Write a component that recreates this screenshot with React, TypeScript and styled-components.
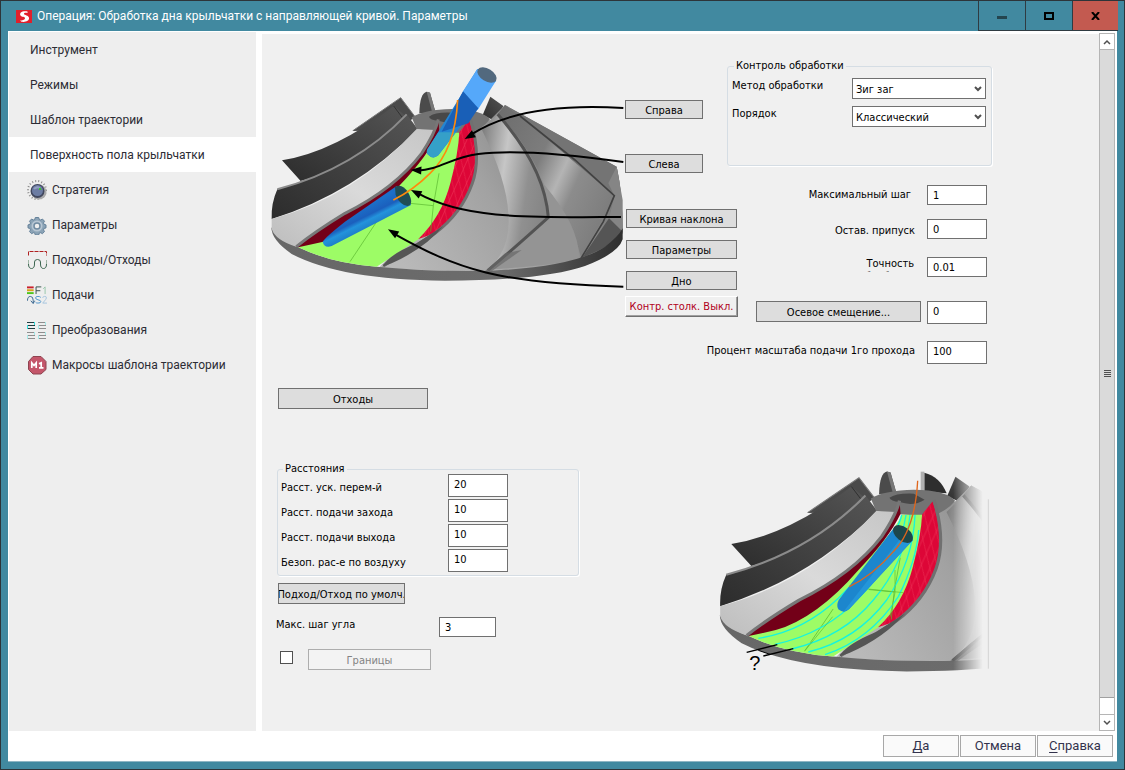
import React from 'react';
import styled, { createGlobalStyle, css } from 'styled-components';

const GlobalStyle = createGlobalStyle`
  *, *::before, *::after { box-sizing: border-box; }
  body { margin: 0; background: #4189a0; }
  button, input, select { font: inherit; color: inherit; margin: 0; }
`;

const formFont = '"DejaVu Sans Condensed", "DejaVu Sans", sans-serif';
const menuFont = 'Roboto, sans-serif';

/* ---------- window frame ---------- */

const Window = styled.div`
  display: flex;
  flex-direction: column;
  min-height: 100vh;
  padding: 0 7px 7px;
  background: #4189a0;
  border: 1px solid #2d3439;
`;

const TitleBar = styled.header`
  display: flex;
  align-items: center;
  height: 30px;
  margin-right: -1px;
  padding-left: 8px;
  gap: 5px;
  color: #fff;
`;

const Title = styled.h1`
  flex: 1;
  margin: 0;
  font: 400 12px/16px ${menuFont};
  white-space: nowrap;
`;

const WindowControls = styled.div`
  display: flex;
  align-self: stretch;
`;

const WindowButton = styled.button<{ $danger?: boolean }>`
  display: flex;
  align-items: center;
  justify-content: center;
  width: ${(p) => (p.$danger ? 46 : 47)}px;
  padding: 0;
  border: solid #2f3b42;
  border-width: 0 0 1px 1px;
  background: ${(p) => (p.$danger ? '#c35a50' : '#4189a0')};
`;

const Content = styled.div`
  display: flex;
  flex: 1;
  flex-direction: column;
  background: #fff;
  border-bottom: 1px solid #8fb6c4;
`;

const Body = styled.div`
  display: flex;
  flex: 1;
  padding: 1px 2px 0 1px;
`;

/* ---------- side menu ---------- */

const Sidebar = styled.nav`
  width: 247px;
  flex: none;
  background: #eee;
`;

const MenuItem = styled.button<{ $active?: boolean; $icon?: boolean }>`
  display: flex;
  align-items: center;
  width: 100%;
  height: 35px;
  gap: 5px;
  padding: 0 0 0 ${(p) => (p.$icon ? 18 : 21)}px;
  border: 0;
  background: ${(p) => (p.$active ? '#fff' : 'transparent')};
  color: #2c2c34;
  font: 400 12px/16px ${menuFont};
  text-align: left;
  white-space: nowrap;
`;

/* ---------- form panel ---------- */

const Panel = styled.main`
  flex: 1;
  margin: 2px 0 0 6px;
  padding: 16px 0 0 3px;
  background: #f0f0f0;
  color: #000;
  font: 400 11px/15px ${formFont};
`;

const TopSection = styled.section`
  display: grid;
  grid-template-columns: 360px 102px 265px;
  margin-bottom: 24px;
`;

const BottomSection = styled.section`
  display: grid;
  grid-template-columns: 445px 290px;
  align-items: start;
`;

const Callouts = styled.div`
  display: flex;
  flex-direction: column;
  align-items: flex-start;
  gap: 36px;
  padding-top: 50px;
`;

const CalloutGroup = styled.div<{ $gap: number; $indent?: number }>`
  display: flex;
  flex-direction: column;
  gap: ${(p) => p.$gap}px;
  padding-left: ${(p) => p.$indent ?? 0}px;
`;

const PushButton = styled.button<{ $width: number; $height?: number }>`
  display: flex;
  align-items: center;
  justify-content: center;
  flex: none;
  width: ${(p) => p.$width}px;
  height: ${(p) => p.$height ?? 21}px;
  padding: 1px 0 0;
  overflow: hidden;
  border: 1px solid #707070;
  background: #ddd;
  white-space: nowrap;
  &:disabled {
    border-color: #adadad;
    background: #f3f3f3;
    color: #838383;
  }
`;

const CollisionButton = styled.button`
  width: 113px;
  height: 21px;
  margin-top: -30px;
  padding: 0;
  border: 1px solid;
  border-color: #fff #707070 #707070 #fff;
  background: #f0f0f0;
  box-shadow: inset -1px -1px #a0a0a0;
  color: #b00020;
  white-space: nowrap;
`;

const GroupBox = styled.fieldset<{ $tall?: boolean }>`
  min-width: 0;
  margin: 0;
  padding: ${(p) => (p.$tall ? '7px 5px 38px 4px' : '0 3px 3px')};
  border: 1px solid #d5dde4;
  border-radius: 3px;
  box-shadow: 1px 1px #fff;
`;

const Legend = styled.legend`
  margin-left: 2px;
  padding: 0 2px;
  line-height: 10px;
`;

const FieldStack = styled.div<{ $gap: number }>`
  display: flex;
  flex-direction: column;
  gap: ${(p) => p.$gap}px;
`;

const SelectRow = styled.div`
  display: flex;
  justify-content: space-between;
  align-items: flex-start;
`;

const SelectBox = styled.div`
  position: relative;
  width: 134px;
  select {
    display: block;
    width: 100%;
    height: 21px;
    padding: 1px 16px 0 3px;
    appearance: none;
    border: 1px solid #707070;
    border-radius: 0;
    background: #fff;
  }
  svg {
    position: absolute;
    top: 8px;
    right: 4px;
    pointer-events: none;
  }
`;

const RightColumn = styled.div`
  min-width: 0;
  padding-top: 11px;
`;

const NumericFields = styled.div`
  display: grid;
  grid-template-columns: minmax(0, 1fr);
  grid-template-rows: 34px 38px 44px 40px 23px;
  margin: 19px 5px 0 0;
`;

const NumericRow = styled.div<{ $gap?: number }>`
  display: flex;
  justify-content: flex-end;
  align-items: flex-start;
  gap: ${(p) => p.$gap ?? 12}px;
`;

const Caption = styled.label<{ $top?: number; $clip?: boolean }>`
  flex: none;
  padding-top: ${(p) => p.$top ?? 2}px;
  white-space: nowrap;
  ${(p) =>
    p.$clip &&
    css`
      width: 60px;
      height: 15px;
      overflow: hidden;
      padding-top: 0;
      line-height: 13px;
      text-align: right;
      white-space: normal;
    `}
`;

const TextBox = styled.input<{ $width?: number; $tall?: boolean }>`
  flex: none;
  width: ${(p) => p.$width ?? 60}px;
  height: ${(p) => (p.$tall ? 23 : 20)}px;
  padding: ${(p) => (p.$tall ? '0 5px 3px' : '1px 5px 0')};
  border: 1px solid #707070;
  border-radius: 0;
  background: #fff;
`;

const Departures = styled.div`
  padding: 0 0 51px 13px;
`;

const Distances = styled.div`
  padding-top: 4px;
`;

const DistanceBox = styled.div`
  width: 302px;
  margin-left: 12px;
`;

const DistanceRow = styled.div`
  display: grid;
  grid-template-columns: 167px 60px;
`;

const DefaultsArea = styled.div`
  padding: 7px 0 0 13px;
`;

const AngleRow = styled.div`
  display: grid;
  grid-template-columns: 163px 57px;
  margin: 13px 0 12px -2px;
`;

const BoundaryRow = styled.div`
  display: flex;
  align-items: center;
  gap: 15px;
  padding: 0 0 0 2px;
`;

const CheckBox = styled.input`
  width: 13px;
  height: 13px;
  appearance: none;
  border: 1px solid #505050;
  background: #fff;
  margin-bottom: 4px !important;
`;

const Drawing = styled.svg`
  display: block;
`;

/* ---------- scroll bar and footer ---------- */

const ScrollBar = styled.div`
  display: flex;
  flex-direction: column;
  width: 16px;
  margin-top: 1px;
  border: 1px solid #b5b5b5;
  background: #fff;
`;

const ScrollArrow = styled.button`
  display: flex;
  align-items: center;
  justify-content: center;
  height: 16px;
  padding: 0;
  border: 0 solid #b5b5b5;
  background: #fff;
  &:first-child { border-bottom-width: 1px; }
  &:last-child { border-top-width: 1px; }
`;

const ScrollThumb = styled.div`
  display: flex;
  flex: 1;
  align-items: center;
  justify-content: center;
  margin-bottom: 16px;
  border-bottom: 1px solid #a0a0a0;
  background: #dadada;
`;

const Footer = styled.footer`
  display: flex;
  justify-content: flex-end;
  gap: 1px;
  padding: 4px 4px 4px 0;
`;

const FooterButton = styled.button`
  width: 76px;
  height: 22px;
  padding: 0;
  border: 1px solid #a8a8a8;
  background: #fafafa;
  color: #33334d;
  font: 400 13px/18px ${menuFont};
  u { text-underline-offset: 2px; text-decoration-skip-ink: none; }
`;

/* ---------- icons ---------- */

const IconSvg = styled.svg`
  flex: none;
`;

const DialIcon = () => (
  <IconSvg width="20" height="20" viewBox="0 0 20 20">
    <circle cx="10" cy="10" r="9" fill="none" stroke="#8c8c8c" strokeWidth="2" strokeDasharray="1 2.1" />
    <circle cx="12" cy="12" r="7.5" fill="#aaa" />
    <circle cx="10.5" cy="11" r="7" fill="#41475e" />
    <circle cx="10.5" cy="10.5" r="5.5" fill="#6c7ca3" />
    <path d="M7 9a4 3 0 0 1 6-1" fill="none" stroke="#93a2c2" strokeWidth="2" />
    <rect x="12" y="8" width="2" height="2" fill="#39c52c" />
  </IconSvg>
);

const GearIcon = () => (
  <IconSvg width="20" height="20" viewBox="0 0 20 20">
    <g fill="#8ba3b6" stroke="#66829a" strokeWidth="1">
      <path d="M8.300 2.500h3.400l.5 1.800 1.500.7 1.700-1 2.100 2.200-1 1.700.6 1.500 1.900.5v3l-1.900.5-.6 1.500 1 1.700-2.100 2.100-1.700-1-1.500.6-.5 1.700H8.300l-.5-1.700-1.500-.6-1.700 1-2.100-2.100 1-1.700-.6-1.500-1.900-.5v-3l1.900-.5.6-1.500-1-1.700 2.100-2.200 1.700 1 1.500-.7z" />
      <circle cx="10" cy="11" r="5.500" fill="#b7c6d3" stroke="none" />
      <circle cx="10" cy="11" r="3" fill="#eee" stroke="#708ba1" strokeWidth="1.500" />
    </g>
  </IconSvg>
);

const ApproachIcon = () => (
  <IconSvg width="20" height="20" viewBox="0 0 20 20" fill="none">
    <path d="M1.500 5.500v-4h18v4" stroke="#b02020" strokeDasharray="4 1" />
    <path d="M1.500 10v4M19.500 10v4" stroke="#9fb5a5" />
    <path d="M1.500 14q0 4.500 3 4.500 3 0 3-4.500v-2q0-2.500 3-2.500t3 2.500v2q0 4.500 3 4.500 3 0 3-4.500" stroke="#3c6650" />
  </IconSvg>
);

const FeedIcon = () => (
  <IconSvg width="20" height="20" viewBox="0 0 21 20" fill="none">
    <path d="M0 2h7" stroke="#c8202c" strokeWidth="2" />
    <path d="M0 5h7" stroke="#d8a018" strokeWidth="2" />
    <path d="M0 8h7" stroke="#4fc51c" strokeWidth="2" />
    <path d="M9.500 9V1.500h5.500M9.500 5.500h4.500" stroke="#35504a" />
    <path d="M17 3.500l2-2V9" stroke="#97c7aa" />
    <path d="M.5 16q0-4.500 3-4.500 3 0 3 4v3M4 16l2.500 3 1.500-3" stroke="#36648e" />
    <path d="M14.500 12.500q-1-1-3-1-2.500 0-2.500 1.500 0 1.500 2.500 2 3 .5 3 2t-3 1.500q-2 0-2.500-1" stroke="#4c93cb" />
    <path d="M16.500 13q0-1.500 2-1.500t2 1.500q0 1-4 5.500h4.500" stroke="#a5c5de" />
  </IconSvg>
);

const TransformIcon = () => (
  <IconSvg width="20" height="20" viewBox="0 0 20 20" fill="none">
    <path d="M0 2.500h8M0 5.500h8M0 8.500h8" stroke="#203c40" />
    <path d="M.5 5v4M7.500 2v3" stroke="#35dede" />
    <path d="M11 2.500h8M11 5.500h8M11 8.500h8M0 12.500h8M0 15.500h8M0 18.500h8M11 12.500h8M11 15.500h8M11 18.500h8" stroke="#8e8e8e" />
    <path d="M18.500 2v3M11.500 5v4M7.500 12v3M.5 15v4M18.500 12v3M11.500 15v4" stroke="#a5e8e8" />
  </IconSvg>
);

const MacroIcon = () => (
  <IconSvg width="20" height="20" viewBox="0 0 20 20">
    <path d="M6 1.500h8l5 5v8l-5 4.500H6l-4.500-4.500v-8z" fill="#c4566a" stroke="#8d4450" />
    <path d="M4.800 13V7.800l2.200 2.700 2.200-2.700V13M12 8.700l2.200-1V13M12 12.800h4.500" fill="none" stroke="#fff" strokeWidth="1.700" />
  </IconSvg>
);

const LogoIcon = () => (
  <IconSvg width="16" height="13" viewBox="0 0 16 13">
    <rect width="16" height="13" fill="#e11f2b" />
    <path d="M11.500 1.500C6 .5 3 3 4.500 5.500c1 1.700 5 1 4.500 3-.4 1.400-3 2-5 2l1.500 1.300c4 .6 8-.8 7.500-4C12.500 5 8.500 5.500 8 4c-.3-1 1.500-1.600 3.500-1z" fill="#fff" />
  </IconSvg>
);

const Chevron = ({ up, bold }: { up?: boolean; bold?: boolean }) => (
  <svg width="8" height="6" viewBox="0 0 8 6" fill="none">
    <path d={up ? 'M1 5l3-3 3 3' : 'M1 1l3 3 3-3'} stroke="#505050" strokeWidth={bold ? 2 : 1.5} />
  </svg>
);

/* ---------- impeller drawings ---------- */

const Gradients = ({ id }: { id: string }) => (
  <defs>
    <linearGradient id={`${id}-dark`} x1="0" y1="1" x2="1" y2="0">
      <stop offset="0" stopColor="#2c2c2c" />
      <stop offset="1" stopColor="#555" />
    </linearGradient>
    <linearGradient id={`${id}-body`} x1="0" y1=".7" x2="1" y2=".3">
      <stop offset="0" stopColor="#b9b9b9" />
      <stop offset=".45" stopColor="#a2a2a2" />
      <stop offset="1" stopColor="#6e6e6e" />
    </linearGradient>
    <linearGradient id={`${id}-lens`} x1="0" y1="0" x2="1" y2=".35">
      <stop offset="0" stopColor="#777" />
      <stop offset=".4" stopColor="#c6c6c6" />
      <stop offset=".75" stopColor="#909090" />
      <stop offset="1" stopColor="#868686" />
    </linearGradient>
    <linearGradient id={`${id}-blade`} x1="0" y1="0" x2="1" y2=".6">
      <stop offset="0" stopColor="#6c6c6c" />
      <stop offset=".42" stopColor="#7d7d7d" />
      <stop offset=".6" stopColor="#b4b4b4" />
      <stop offset=".72" stopColor="#8c8c8c" />
      <stop offset="1" stopColor="#7d7d7d" />
    </linearGradient>
    <linearGradient id={`${id}-rim`} x1="0" x2="1">
      <stop offset="0" stopColor="#676767" />
      <stop offset=".65" stopColor="#6c6c6c" />
      <stop offset=".9" stopColor="#404040" />
      <stop offset="1" stopColor="#2e2e2e" />
    </linearGradient>
    <linearGradient id={`${id}-ribbon`} x1="0" y1="1" x2="1" y2="0">
      <stop offset="0" stopColor="#bdbdbd" />
      <stop offset=".5" stopColor="#dadada" />
      <stop offset="1" stopColor="#c6c6c6" />
    </linearGradient>
    <linearGradient id={`${id}-tool`} gradientUnits="userSpaceOnUse" x1="290" y1="475" x2="320" y2="535">
      <stop offset="0" stopColor="#1c6fc8" />
      <stop offset=".4" stopColor="#1b5fbd" />
      <stop offset=".6" stopColor="#2393dc" />
      <stop offset="1" stopColor="#1c78c4" />
    </linearGradient>
    <pattern id={`${id}-mesh`} width="26" height="34" patternUnits="userSpaceOnUse" patternTransform="rotate(24)">
      <path d="M0 0L26 34M13 0V34" fill="none" stroke="#f0385a" strokeWidth="1.500" />
    </pattern>
  </defs>
);

const Impeller = ({ id }: { id: string }) => (
  <g>
    {/* blade tips behind the hub */}
    <path d="M463 190Q464 130 485 125L495 128 512 188z" fill="#4b4b4b" />
    <path d="M485 125L495 128 512 188 502 188z" fill="#777" />
    <path d="M653 195L676 140 715 168 695 215z" fill={`url(#${id}-dark)`} />
    {/* right hand body with its blades */}
    <path d="M600 225L675 210 720 165 1055 350Q1073 430 1073 550 1000 650 680 668L340 655 430 560 480 540Q600 400 600 225z" fill={`url(#${id}-body)`} />
    <path d="M651 240L696 196Q835 360 850 500 770 575 665 662 740 600 730 490 725 390 651 240z" fill={`url(#${id}-lens)`} />
    <path d="M720 165L765 198 1048 437 1015 505 948 623Q920 510 838 405 790 280 698 192z" fill={`url(#${id}-blade)`} />
    <path d="M838 405Q945 530 942 628 830 650 682 658 770 580 850 502z" fill="#949494" />
    <path d="M720 165L1055 350Q1073 430 1073 545L1032 505 1048 437 765 198z" fill="#747474" />
    <path d="M1030 400L1048 437 1032 505 1073 545 1073 450 1055 350z" fill="#858585" />
    <path d="M1032 505L1073 545Q1050 585 952 622z" fill="#555" />
    <path d="M698 193Q838 350 850 502 770 575 668 662" fill="none" stroke="#535353" strokeWidth="9" />
    <path d="M765 198L930 330 1048 437 1015 515 948 625" fill="none" stroke="#414141" strokeWidth="5" />
    {/* base rim */}
    <path d="M19 532Q40 570 100 592 200 640 335 650 500 666 680 662 930 650 1020 590 1060 560 1073 535V568Q1060 610 960 648 830 692 540 692 230 690 80 612 19 570 19 532z" fill={`url(#${id}-rim)`} />
    {/* left blades */}
    <path d="M262 243L407 143 450 200 400 240z" fill="#4a4a4a" />
    <path d="M51 331Q210 305 386 168L430 205Q280 350 107 393z" fill={`url(#${id}-dark)`} />
    <path d="M386 168L412 203" stroke="#222" strokeWidth="2" />
    <path d="M265 241L407 143 450 200" fill="none" stroke="#777" strokeWidth="3" />
    <path d="M37 418Q270 355 425 193L458 237Q270 430 20 507 18 460 37 418z" fill={`url(#${id}-dark)`} />
    <path d="M37 418Q270 355 425 193" fill="none" stroke="#8b8b8b" strokeWidth="6" />
    {/* hub */}
    <path d="M440 202Q480 178 560 177 650 178 675 208 650 240 610 250 540 252 455 238z" fill="#737373" />
    <path d="M492 200Q510 186 560 188L590 205Q560 225 520 212 495 210 492 200z" fill="#484848" />
    {/* light ribbon, floor and side walls */}
    <path d="M20 507Q270 440 455 237L510 240Q495 275 470 310 390 415 240 490 150 545 94 590 30 570 20 536z" fill={`url(#${id}-ribbon)`} />
    <path d="M100 592Q300 510 437 365 520 275 525 248H588L570 400Q560 500 495 545L335 650Q200 640 100 592z" fill="#9dfc66" />
    <path d="M520 208L523 245Q490 315 405 405 290 540 175 575L100 592 94 590Q150 545 240 490 390 415 470 310 510 250 520 208z" fill="#730018" />
    <path d="M583 247L612 210Q648 310 622 400 590 490 510 550L460 567Q530 500 556 400 580 310 583 247z" fill="#dd0637" />
    <path d="M583 247L612 210Q648 310 622 400 590 490 510 550L460 567Q530 500 556 400 580 310 583 247z" fill={`url(#${id}-mesh)`} />
    <path d="M94 590Q150 545 240 490 390 415 470 310 510 250 520 208" fill="none" stroke="#777" strokeWidth="9" />
    <path d="M616 206Q650 320 622 400 590 490 510 550L355 648" fill="none" stroke="#707070" strokeWidth="9" />
    <path d="M352 650Q370 615 455 580L535 528Q480 595 380 640z" fill="#555" />
    <path d="M335 515L255 635M435 460L505 467 522 370M505 467L497 545" fill="none" stroke="#58b52e" strokeWidth="2" />
    <path d="M720 610L660 664H680L770 600z" fill="#686868" opacity=".7" />
  </g>
);

const ArrowHead = ({ x, y, angle }: { x: number; y: number; angle: number }) => (
  <path d="M0 0L32-12V12z" transform={`translate(${x} ${y}) rotate(${angle})`} />
);

const CalloutDrawing = () => (
  <Drawing width="360" height="240" viewBox="0 0 1080 720" role="img" aria-label="Крыльчатка">
    <Gradients id="a" />
    <Impeller id="a" />
    <path d="M395 408Q430 420 438 465L200 588Q178 596 173 575 178 564 240 515z" fill="url(#a-tool)" />
    <path d="M390 412Q410 398 430 428 448 462 428 468 405 466 392 435z" fill="#1f4d55" />
    <path d="M637 57L693 92 520 316Q503 330 487 312 482 302 492 290z" fill="#2385d2" />
    <path d="M637 57L693 92 638 180 594 124z" fill="#55a8fa" />
    <path d="M594 124L640 175 610 220 530 245z" fill="#195fb7" />
    <path d="M520 247H572L520 316Q503 330 487 312 482 302 492 290z" fill="#35a0c8" />
    <ellipse cx="666" cy="75" rx="32" ry="19" transform="rotate(32 666 75)" fill="#52697e" />
    <path d="M578 150Q570 300 495 370 445 420 385 450" fill="none" stroke="#ff8a0c" strokeWidth="5" />
    <g fill="none" stroke="#000" strokeWidth="6">
      <path d="M1075 174Q770 155 618 254" />
      <path d="M1075 336Q780 295 640 312C550 325 530 358 455 362" />
      <path d="M1068 501C800 502 600 510 455 428" />
      <path d="M1075 710C700 700 580 660 385 550" />
    </g>
    <ArrowHead x={599} y={267} angle={-30} />
    <ArrowHead x={437} y={360} angle={3} />
    <ArrowHead x={438} y={420} angle={27} />
    <ArrowHead x={369} y={538} angle={31} />
  </Drawing>
);

const FloorDrawing = () => (
  <Drawing width="290" height="220" viewBox="0 0 870 660" role="img" aria-label="Дно крыльчатки">
    <Gradients id="b" />
    <defs>
      <linearGradient id="b-fade" gradientUnits="userSpaceOnUse" x1="730" x2="818" y1="0" y2="0">
        <stop offset="0" stopColor="#fff" />
        <stop offset="1" stopColor="#000" />
      </linearGradient>
      <mask id="b-mask" maskUnits="userSpaceOnUse" x="0" y="0" width="870" height="660">
        <rect width="870" height="660" fill="url(#b-fade)" />
      </mask>
    </defs>
    <path d="M643 38Q690 50 710 100L643 95z" fill="#2e2e2e" />
    <path d="M632 35H643V95H632z" fill="#b0b0b0" />
    <g mask="url(#b-mask)">
      <g transform="matrix(1.076 0 0 1.058 9 -98)">
        <Impeller id="b" />
      </g>
    </g>
    <path d="M835 118V626" stroke="#d3d3d3" strokeWidth="3" />
    <g fill="none" stroke="#16f4de" strokeWidth="4">
      <path d="M145 535Q280 515 385 415 560 240 575 165" />
      <path d="M195 553Q350 520 450 410 570 290 588 165" />
      <path d="M245 567Q400 530 490 420 585 310 600 165" />
      <path d="M295 576Q440 540 530 420 610 300 615 165" />
      <path d="M345 584Q480 540 565 410 620 300 626 210" />
    </g>
    <path d="M368 470L285 572M435 383L580 398M555 330V398L540 470" fill="none" stroke="#5bbf30" strokeWidth="2" />
    <path d="M551 205L609 240 417 448Q402 462 385 448 378 438 386 420z" fill="#1c86cd" />
    <path d="M580 225L609 240 417 448 400 455z" fill="#2396d9" />
    <ellipse cx="579" cy="222" rx="34" ry="21" transform="rotate(38 579 222)" fill="#1d474b" />
    <path d="M623 62Q615 210 550 275 490 345 418 380" fill="none" stroke="#e0661c" strokeWidth="4" />
    <path d="M110 577L202 554M160 588L250 566" stroke="#000" strokeWidth="4" />
    <path d="M145 571L180 583" stroke="#000" strokeWidth="3" />
    <text x="118" y="629" fontFamily="Liberation Sans, sans-serif" fontSize="60">?</text>
  </Drawing>
);

/* ---------- data ---------- */

const menu: { text: string; Icon?: React.FC; active?: boolean }[] = [
  { text: 'Инструмент' },
  { text: 'Режимы' },
  { text: 'Шаблон траектории' },
  { text: 'Поверхность пола крыльчатки', active: true },
  { text: 'Стратегия', Icon: DialIcon },
  { text: 'Параметры', Icon: GearIcon },
  { text: 'Подходы/Отходы', Icon: ApproachIcon },
  { text: 'Подачи', Icon: FeedIcon },
  { text: 'Преобразования', Icon: TransformIcon },
  { text: 'Макросы шаблона траектории', Icon: MacroIcon },
];

const distances = [
  { id: 'rapid', text: 'Расст. уск. перем-й', value: '20' },
  { id: 'entry', text: 'Расст. подачи захода', value: '10' },
  { id: 'exit', text: 'Расст. подачи выхода', value: '10' },
  { id: 'air', text: 'Безоп. рас-е по воздуху', value: '10' },
];

const methods = [
  { id: 'method', text: 'Метод обработки', value: 'Зиг заг' },
  { id: 'order', text: 'Порядок', value: 'Классический' },
];

export default function App() {
  return (
    <>
      <GlobalStyle />
      <Window>
        <TitleBar>
          <LogoIcon />
          <Title>Операция: Обработка дна крыльчатки с направляющей кривой. Параметры</Title>
          <WindowControls>
            <WindowButton aria-label="Свернуть">
              <svg width="10" height="10"><rect y="5" width="10" height="3" fill="#24454f" /></svg>
            </WindowButton>
            <WindowButton aria-label="Развернуть">
              <svg width="10" height="8"><rect x="1" y="1" width="8" height="6" fill="none" stroke="#000" strokeWidth="2" /></svg>
            </WindowButton>
            <WindowButton $danger aria-label="Закрыть">
              <svg width="9" height="8" viewBox="0 0 9 8"><path d="M1 0l7 8M8 0L1 8" stroke="#000" strokeWidth="2" /></svg>
            </WindowButton>
          </WindowControls>
        </TitleBar>

        <Content>
          <Body>
            <Sidebar>
              {menu.map(({ text, Icon, active }) => (
                <MenuItem key={text} $active={active} $icon={!!Icon}>
                  {Icon && <Icon />}
                  {text}
                </MenuItem>
              ))}
            </Sidebar>

            <Panel>
              <TopSection>
                <CalloutDrawing />
                <Callouts>
                  <CalloutGroup $gap={35}>
                    <PushButton $width={78} $height={19}>Справа</PushButton>
                    <PushButton $width={78} $height={19}>Слева</PushButton>
                  </CalloutGroup>
                  <CalloutGroup $gap={12} $indent={1}>
                    <PushButton $width={111} $height={19}>Кривая наклона</PushButton>
                    <PushButton $width={111} $height={19}>Параметры</PushButton>
                    <PushButton $width={111} $height={19}>Дно</PushButton>
                  </CalloutGroup>
                  <CollisionButton>Контр. столк. Выкл.</CollisionButton>
                </Callouts>
                <RightColumn>
                  <GroupBox $tall>
                    <Legend>Контроль обработки</Legend>
                    <FieldStack $gap={7}>
                      {methods.map((m) => (
                        <SelectRow key={m.id}>
                          <label htmlFor={m.id}>{m.text}</label>
                          <SelectBox>
                            <select id={m.id} defaultValue={m.value}>
                              <option>{m.value}</option>
                            </select>
                            <Chevron bold />
                          </SelectBox>
                        </SelectRow>
                      ))}
                    </FieldStack>
                  </GroupBox>
                  <NumericFields>
                    <NumericRow $gap={16}>
                      <Caption htmlFor="step">Максимальный шаг</Caption>
                      <TextBox id="step" defaultValue="1" />
                    </NumericRow>
                    <NumericRow>
                      <Caption htmlFor="allowance" $top={4}>Остав. припуск</Caption>
                      <TextBox id="allowance" defaultValue="0" />
                    </NumericRow>
                    <NumericRow $gap={13}>
                      <Caption htmlFor="precision" $clip>Точность обработки</Caption>
                      <TextBox id="precision" defaultValue="0.01" />
                    </NumericRow>
                    <NumericRow $gap={6}>
                      <PushButton $width={165}>Осевое смещение...</PushButton>
                      <TextBox aria-label="Осевое смещение" $tall defaultValue="0" />
                    </NumericRow>
                    <NumericRow>
                      <Caption htmlFor="feed">Процент масштаба подачи 1го прохода</Caption>
                      <TextBox id="feed" $tall defaultValue="100" />
                    </NumericRow>
                  </NumericFields>
                </RightColumn>
              </TopSection>

              <Departures>
                <PushButton $width={150}>Отходы</PushButton>
              </Departures>

              <BottomSection>
                <Distances>
                  <DistanceBox>
                    <GroupBox>
                      <Legend>Расстояния</Legend>
                      <FieldStack $gap={2}>
                        {distances.map((d) => (
                          <DistanceRow key={d.id}>
                            <Caption htmlFor={d.id} $top={6}>{d.text}</Caption>
                            <TextBox id={d.id} $tall defaultValue={d.value} />
                          </DistanceRow>
                        ))}
                      </FieldStack>
                    </GroupBox>
                  </DistanceBox>
                  <DefaultsArea>
                    <PushButton $width={127}>Подход/Отход по умолч.</PushButton>
                    <AngleRow>
                      <Caption htmlFor="angle" $top={0}>Макс. шаг угла</Caption>
                      <TextBox id="angle" $width={57} defaultValue="3" />
                    </AngleRow>
                    <BoundaryRow>
                      <CheckBox type="checkbox" aria-label="Границы" />
                      <PushButton $width={123} disabled>Границы</PushButton>
                    </BoundaryRow>
                  </DefaultsArea>
                </Distances>
                <FloorDrawing />
              </BottomSection>
            </Panel>

            <ScrollBar>
              <ScrollArrow aria-label="Вверх"><Chevron up /></ScrollArrow>
              <ScrollThumb>
                <svg width="7" height="8"><path d="M0 .5h7M0 2.500h7M0 4.500h7M0 6.500h7" stroke="#505050" /></svg>
              </ScrollThumb>
              <ScrollArrow aria-label="Вниз"><Chevron /></ScrollArrow>
            </ScrollBar>
          </Body>

          <Footer>
            <FooterButton><u>Д</u>а</FooterButton>
            <FooterButton>Отмена</FooterButton>
            <FooterButton><u>С</u>правка</FooterButton>
          </Footer>
        </Content>
      </Window>
    </>
  );
}
